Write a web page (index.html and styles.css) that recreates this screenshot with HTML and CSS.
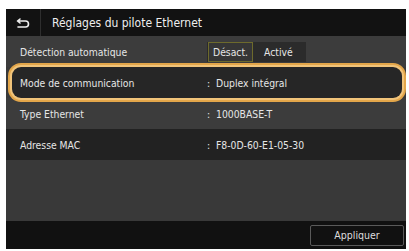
FILE: index.html
```html
<!DOCTYPE html>
<html lang="fr">
<head>
<meta charset="utf-8">
<link rel="stylesheet" href="styles.css">
</head>
<body>
<div class="screen">
  <header class="topbar">
    <div class="back">
      <svg width="14" height="10" viewBox="0 0 14 10"><path d="M4 1 L1.5 3 L4 5 M1.5 3 H9.5 A3 3 0 0 1 9.5 9 H2" fill="none" stroke="#eee" stroke-width="1.6" stroke-linecap="round" stroke-linejoin="round"/></svg>
    </div>
    <div class="title">Réglages du pilote Ethernet</div>
  </header>
  <main class="list">
    <div class="row light">
      <div class="label">Détection automatique</div>
      <div class="seg">
        <span class="opt on">Désact.</span>
        <span class="opt">Activé</span>
      </div>
    </div>
    <div class="row dark focus">
      <div class="label">Mode de communication</div>
      <div class="value"><span class="colon">:</span>Duplex intégral</div>
    </div>
    <div class="row light">
      <div class="label">Type Ethernet</div>
      <div class="value"><span class="colon">:</span>1000BASE-T</div>
    </div>
    <div class="row dark">
      <div class="label">Adresse MAC</div>
      <div class="value"><span class="colon">:</span>F8-0D-60-E1-05-30</div>
    </div>
  </main>
  <footer class="bottombar">
    <button class="apply">Appliquer</button>
  </footer>
</div>
</body>
</html>
```
FILE: styles.css
```css
html, body { margin: 0; padding: 0; background: #fff; }
body { padding: 9px 0 0 6px; }
.screen {
  width: 400px; height: 240px;
  background: #393939;
  display: flex; flex-direction: column;
  font-family: "DejaVu Sans Condensed", "DejaVu Sans", sans-serif;
  font-stretch: condensed;
  color: #e6e6e6;
  font-size: 10.3px;
}
.topbar {
  height: 27px; background: #121212;
  display: flex; align-items: center;
}
.back {
  width: 34px; height: 27px;
  border-right: 1px solid #2e2e2e;
  display: flex; align-items: center; justify-content: center;
}
.title { padding-left: 11px; font-size: 12px; color: #eee; }
.list { flex: 1; display: flex; flex-direction: column; }
.row {
  height: 31px; display: flex; align-items: center;
  padding-left: 14px;
}
.row.light { background: #3c3c3c; }
.row.dark { background: #222; }
.row.focus {
  background: #262626;
  margin: 0 4px 0 6px;
  padding-left: 8px;
  border-radius: 9px;
  box-shadow: 0 0 0 2px #f1c47a, 0 0 0 4px #e3a64a;
  position: relative;
  z-index: 1;
}
.label { width: 187px; }
.value { display: flex; }
.colon { width: 9px; }
.seg {
  display: flex; align-items: center;
  background: #2b2b2b; height: 20px; width: 98px;
  padding-left: 1px;
}
.opt { padding: 0 8px; height: 18px; line-height: 18px; }
.opt.on {
  border: 1px solid #6d6a2c; background: #363636;
  padding: 0 4px; margin-right: 3px;
}
.bottombar {
  height: 28px; background: #111;
  display: flex; align-items: center; justify-content: flex-end;
  padding-right: 2px;
}
.apply {
  width: 94px; height: 21px;
  background: #111; color: #ddd;
  border: 1px solid #5a5a5a; border-radius: 2px;
  font-family: inherit; font-stretch: condensed; font-size: 10.5px;
}
```
